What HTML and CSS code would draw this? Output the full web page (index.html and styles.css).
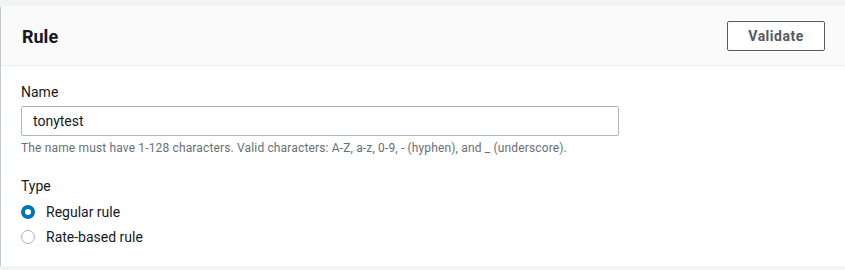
FILE: index.html
```html
<!DOCTYPE html>
<html lang="en">
<head>
    <meta charset="UTF-8">
    <meta name="viewport" content="width=device-width, initial-scale=1.0">
    <title>Rule</title>
    <link rel="stylesheet" href="styles.css">
</head>
<body>
    <div class="panel">
        <!-- Header -->
        <div class="panel-header">
            <h2 class="panel-title">Rule</h2>
            <button class="btn" type="button">Validate</button>
        </div>

        <!-- Form -->
        <div class="panel-body">
            <div class="field">
                <label class="field-label" for="rule-name">Name</label>
                <input class="text-input" id="rule-name" type="text" value="tonytest">
                <div class="field-hint">The name must have 1-128 characters. Valid characters: A-Z, a-z, 0-9, - (hyphen), and _ (underscore).</div>
            </div>

            <div class="field type-field">
                <div class="field-label">Type</div>
                <label class="radio-row">
                    <span class="radio checked"></span>
                    Regular rule
                </label>
                <label class="radio-row">
                    <span class="radio"></span>
                    Rate-based rule
                </label>
            </div>
        </div>
    </div>
</body>
</html>
```

FILE: styles.css
```css
/* Global Styles */
html, body {
    margin: 0;
    padding: 0;
    background-color: #f2f3f3;
    font-family: Roboto, 'Helvetica Neue', Arial, sans-serif;
    color: #16191f;
    overflow: hidden;
}

body {
    padding-top: 6px;
}

/* Panel */
.panel {
    background-color: #fff;
    margin-left: 1px;
    margin-right: -20px;
    box-shadow: 0 1px 1px 0 rgba(0, 28, 36, 0.3),
                1px 1px 1px 0 rgba(0, 28, 36, 0.15),
                -1px 1px 1px 0 rgba(0, 28, 36, 0.15);
}

.panel-header {
    display: flex;
    justify-content: space-between;
    align-items: center;
    background-color: #fafafa;
    border-bottom: 1px solid #eaeded;
    padding: 15px 40px 14px 21px;
}

.panel-title {
    margin: 0;
    font-size: 18px;
    font-weight: bold;
    line-height: 24px;
    padding-top: 2px;
}

.btn {
    height: 30px;
    width: 98px;
    background-color: #fff;
    border: 1px solid #545b64;
    border-radius: 2px;
    color: #545b64;
    font-family: inherit;
    font-size: 14px;
    font-weight: bold;
    letter-spacing: 0.5px;
    cursor: pointer;
}

/* Form */
.panel-body {
    padding: 16px 20px 17px 20px;
}

.field-label {
    display: block;
    font-size: 14px;
    line-height: 20px;
    margin-bottom: 4px;
}

.text-input {
    box-sizing: border-box;
    width: 598px;
    height: 30px;
    padding: 0 11px;
    border: 1px solid #aab7b8;
    border-radius: 2px;
    font-family: inherit;
    font-size: 14px;
    color: #16191f;
}

.field-hint {
    margin-top: 4px;
    font-size: 12px;
    line-height: 16px;
    letter-spacing: 0.15px;
    color: #687078;
}

.type-field {
    margin-top: 20px;
}

.type-field .field-label {
    margin-bottom: 3px;
}

.radio-row {
    display: flex;
    align-items: center;
    gap: 11px;
    height: 25px;
    font-size: 14px;
}

.radio {
    box-sizing: border-box;
    width: 14px;
    height: 14px;
    border-radius: 50%;
    border: 1px solid #aab7b8;
    background-color: #fff;
}

.radio.checked {
    border: 4px solid #0073bb;
}
```
